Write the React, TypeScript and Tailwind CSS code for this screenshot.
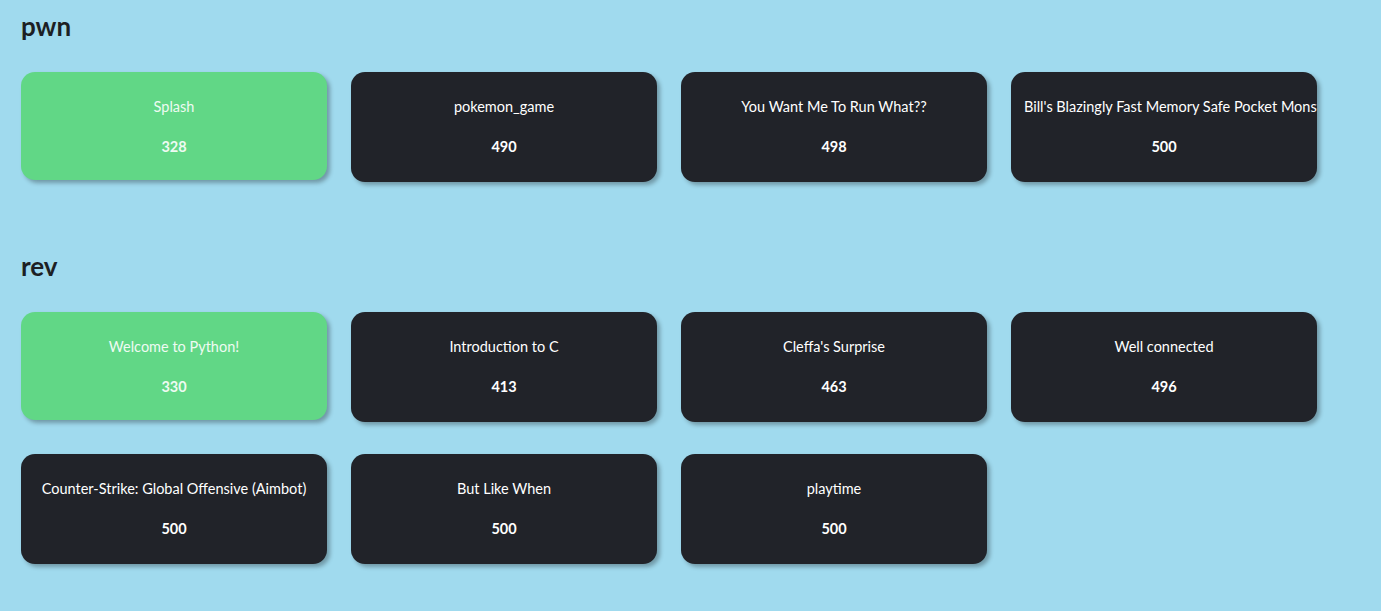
import React from 'react'

interface Challenge {
  name: string
  points: number
  solved?: boolean
}

const categories: { title: string; challenges: Challenge[] }[] = [
  {
    title: 'pwn',
    challenges: [
      { name: 'Splash', points: 328, solved: true },
      { name: 'pokemon_game', points: 490 },
      { name: 'You Want Me To Run What??', points: 498 },
      { name: "Bill's Blazingly Fast Memory Safe Pocket Monsters", points: 500 },
    ],
  },
  {
    title: 'rev',
    challenges: [
      { name: 'Welcome to Python!', points: 330, solved: true },
      { name: 'Introduction to C', points: 413 },
      { name: "Cleffa's Surprise", points: 463 },
      { name: 'Well connected', points: 496 },
      { name: 'Counter-Strike: Global Offensive (Aimbot)', points: 500 },
      { name: 'But Like When', points: 500 },
      { name: 'playtime', points: 500 },
    ],
  },
]

const ChallengeCard: React.FC<{ challenge: Challenge }> = ({ challenge }) => {
  return (
    <div
      className={`flex flex-col items-center overflow-hidden rounded-[14px] px-[13px] pt-[26px] shadow-[3px_3px_4px_rgba(0,0,0,0.3)] ${
        challenge.solved ? 'h-[108px] bg-[#61d786] text-[#eefbf2]' : 'h-[110px] bg-[#212329] text-white'
      }`}
    >
      {/* long names spill into the right padding and get clipped by the card */}
      <div className="w-full whitespace-nowrap text-center text-[14.5px] leading-[18px]">{challenge.name}</div>
      <div className="mt-[22px] text-[14.5px] font-bold leading-[18px]">{challenge.points}</div>
    </div>
  )
}

export default function App() {
  return (
    <div className="min-h-[611px] bg-[#a0daee] px-[21px] pt-[10px] font-['Lato',sans-serif]">
      {categories.map((cat, i) => (
        <section key={cat.title} className={i > 0 ? 'mt-[68px]' : ''}>
          <h2 className="text-[26px] font-bold leading-[32px] text-[#1d1f24]">{cat.title}</h2>
          <div className="mt-[30px] grid grid-cols-[repeat(4,306px)] gap-x-[24px] gap-y-[32px]">
            {cat.challenges.map((c) => (
              <ChallengeCard key={c.name} challenge={c} />
            ))}
          </div>
        </section>
      ))}
    </div>
  )
}
